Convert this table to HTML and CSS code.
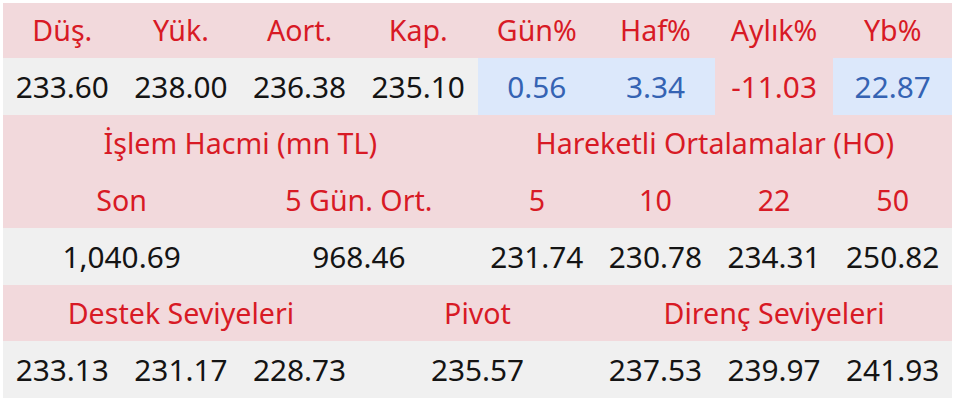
FILE: index.html
```html
<!DOCTYPE html>
<html lang="tr">
<head>
<meta charset="utf-8">
<link rel="stylesheet" href="styles.css">
</head>
<body>
<div class="stats">
  <div class="c h">Düş.</div>
  <div class="c h">Yük.</div>
  <div class="c h">Aort.</div>
  <div class="c h">Kap.</div>
  <div class="c h">Gün%</div>
  <div class="c h">Haf%</div>
  <div class="c h">Aylık%</div>
  <div class="c h">Yb%</div>

  <div class="c v">233.60</div>
  <div class="c v">238.00</div>
  <div class="c v">236.38</div>
  <div class="c v">235.10</div>
  <div class="c v up">0.56</div>
  <div class="c v up">3.34</div>
  <div class="c v down">-11.03</div>
  <div class="c v up">22.87</div>

  <div class="c h s4">İşlem Hacmi (mn TL)</div>
  <div class="c h s4">Hareketli Ortalamalar (HO)</div>

  <div class="c h s2">Son</div>
  <div class="c h s2">5 Gün. Ort.</div>
  <div class="c h">5</div>
  <div class="c h">10</div>
  <div class="c h">22</div>
  <div class="c h">50</div>

  <div class="c v s2">1,040.69</div>
  <div class="c v s2">968.46</div>
  <div class="c v">231.74</div>
  <div class="c v">230.78</div>
  <div class="c v">234.31</div>
  <div class="c v">250.82</div>

  <div class="c h s3">Destek Seviyeleri</div>
  <div class="c h s2">Pivot</div>
  <div class="c h s3">Direnç Seviyeleri</div>

  <div class="c v">233.13</div>
  <div class="c v">231.17</div>
  <div class="c v">228.73</div>
  <div class="c v s2">235.57</div>
  <div class="c v">237.53</div>
  <div class="c v">239.97</div>
  <div class="c v">241.93</div>
</div>
</body>
</html>
```
FILE: styles.css
```css
html, body {
  margin: 0;
  padding: 0;
  background: #ffffff;
}
body {
  padding: 3px 0 0 3px;
  font-family: "Noto Sans", "DejaVu Sans", sans-serif;
}
.stats {
  width: 949px;
  display: grid;
  grid-template-columns: repeat(8, 1fr);
  grid-template-rows: 55px 57px 57px 56px 57px 56px 57px;
}
.c {
  display: flex;
  align-items: center;
  justify-content: center;
  line-height: 1;
  white-space: nowrap;
}
.h {
  background: #f2d9dc;
  color: #d81a25;
  font-size: 28.6px;
}
.v {
  background: #f0f0f0;
  color: #141414;
  font-size: 29.8px;
}
.v.up {
  background: #dce8fb;
  color: #3563b3;
}
.v.down {
  background: #f2d9dc;
  color: #d81a25;
}
.s2 { grid-column: span 2; }
.s3 { grid-column: span 3; }
.s4 { grid-column: span 4; }
```
